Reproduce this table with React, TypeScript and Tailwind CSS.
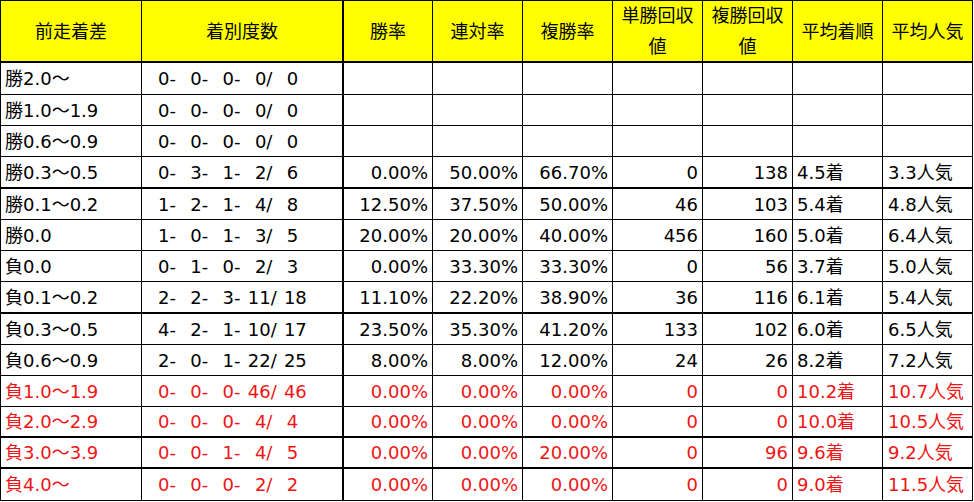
import React from 'react';

type Row = {
  label: string;
  counts: number[];
  stats?: string[];
  red?: boolean;
  thick?: boolean;
};

const rows: Row[] = [
  { label: '勝2.0～', counts: [0, 0, 0, 0, 0] },
  { label: '勝1.0～1.9', counts: [0, 0, 0, 0, 0] },
  { label: '勝0.6～0.9', counts: [0, 0, 0, 0, 0] },
  { label: '勝0.3～0.5', counts: [0, 3, 1, 2, 6], stats: ['0.00%', '50.00%', '66.70%', '0', '138', '4.5着', '3.3人気'], thick: true },
  { label: '勝0.1～0.2', counts: [1, 2, 1, 4, 8], stats: ['12.50%', '37.50%', '50.00%', '46', '103', '5.4着', '4.8人気'] },
  { label: '勝0.0', counts: [1, 0, 1, 3, 5], stats: ['20.00%', '20.00%', '40.00%', '456', '160', '5.0着', '6.4人気'] },
  { label: '負0.0', counts: [0, 1, 0, 2, 3], stats: ['0.00%', '33.30%', '33.30%', '0', '56', '3.7着', '5.0人気'] },
  { label: '負0.1～0.2', counts: [2, 2, 3, 11, 18], stats: ['11.10%', '22.20%', '38.90%', '36', '116', '6.1着', '5.4人気'], thick: true },
  { label: '負0.3～0.5', counts: [4, 2, 1, 10, 17], stats: ['23.50%', '35.30%', '41.20%', '133', '102', '6.0着', '6.5人気'] },
  { label: '負0.6～0.9', counts: [2, 0, 1, 22, 25], stats: ['8.00%', '8.00%', '12.00%', '24', '26', '8.2着', '7.2人気'] },
  { label: '負1.0～1.9', counts: [0, 0, 0, 46, 46], stats: ['0.00%', '0.00%', '0.00%', '0', '0', '10.2着', '10.7人気'], red: true },
  { label: '負2.0～2.9', counts: [0, 0, 0, 4, 4], stats: ['0.00%', '0.00%', '0.00%', '0', '0', '10.0着', '10.5人気'], red: true, thick: true },
  { label: '負3.0～3.9', counts: [0, 0, 1, 4, 5], stats: ['0.00%', '0.00%', '20.00%', '0', '96', '9.6着', '9.2人気'], red: true, thick: true },
  { label: '負4.0～', counts: [0, 0, 0, 2, 2], stats: ['0.00%', '0.00%', '0.00%', '0', '0', '9.0着', '11.5人気'], red: true },
];

const headers: string[][] = [
  ['前走着差'],
  ['着別度数'],
  ['勝率'],
  ['連対率'],
  ['複勝率'],
  ['単勝回収', '値'],
  ['複勝回収', '値'],
  ['平均着順'],
  ['平均人気'],
];

const seps = ['-', '-', '-', '/', ''];

function Header({ lines, col }: { lines: string[]; col: number }) {
  return (
    <div
      className={`flex flex-col items-center justify-center bg-[#ffff00] border-b-2 border-black leading-[31px] ${
        col === 1 ? 'border-r-2' : 'border-r'
      }`}
    >
      {lines.map((l) => (
        <span key={l}>{l}</span>
      ))}
    </div>
  );
}

function BodyRow({ row }: { row: Row }) {
  const b = row.thick ? 'border-b-2' : 'border-b';
  const color = row.red ? 'text-[#f01515]' : 'text-black';
  const stats = row.stats ?? ['', '', '', '', '', '', ''];

  return (
    <>
      <div className={`flex items-center pl-[4px] border-r border-black ${b} ${color}`}>{row.label}</div>
      <div className={`flex items-center pl-[16px] border-r-2 border-black whitespace-pre [word-spacing:1.45px] ${b} ${color}`}>
        {row.counts.map((n, i) => (
          <span key={i}>
            {i === 0 ? '' : String(n).length === 1 ? '  ' : ' '}
            {n}
            {seps[i]}
          </span>
        ))}
      </div>
      {stats.map((s, i) => (
        <div
          key={i}
          className={`flex items-center border-r border-black ${b} ${color} ${
            i < 5 ? 'justify-end pr-[4px]' : i === 5 ? 'pl-[4px]' : 'pl-[5px]'
          }`}
        >
          {s}
        </div>
      ))}
    </>
  );
}

export default function App() {
  return (
    <div className="bg-white w-[974px] h-[502px]">
      <div
        className="grid w-[973px] border-t border-l border-black whitespace-nowrap text-[18px] text-black grid-cols-[141px_202px_89px_90px_90px_90px_90px_90px_90px] grid-rows-[62px_32px_31px_31px_32px_31px_31px_31px_32px_31px_31px_31px_31px_31px_32px]"
        style={{ fontFamily: '"DejaVu Sans", "Noto Sans CJK JP", sans-serif' }}
      >
        {headers.map((h, i) => (
          <Header key={i} lines={h} col={i} />
        ))}
        {rows.map((r) => (
          <BodyRow key={r.label} row={r} />
        ))}
      </div>
    </div>
  );
}
